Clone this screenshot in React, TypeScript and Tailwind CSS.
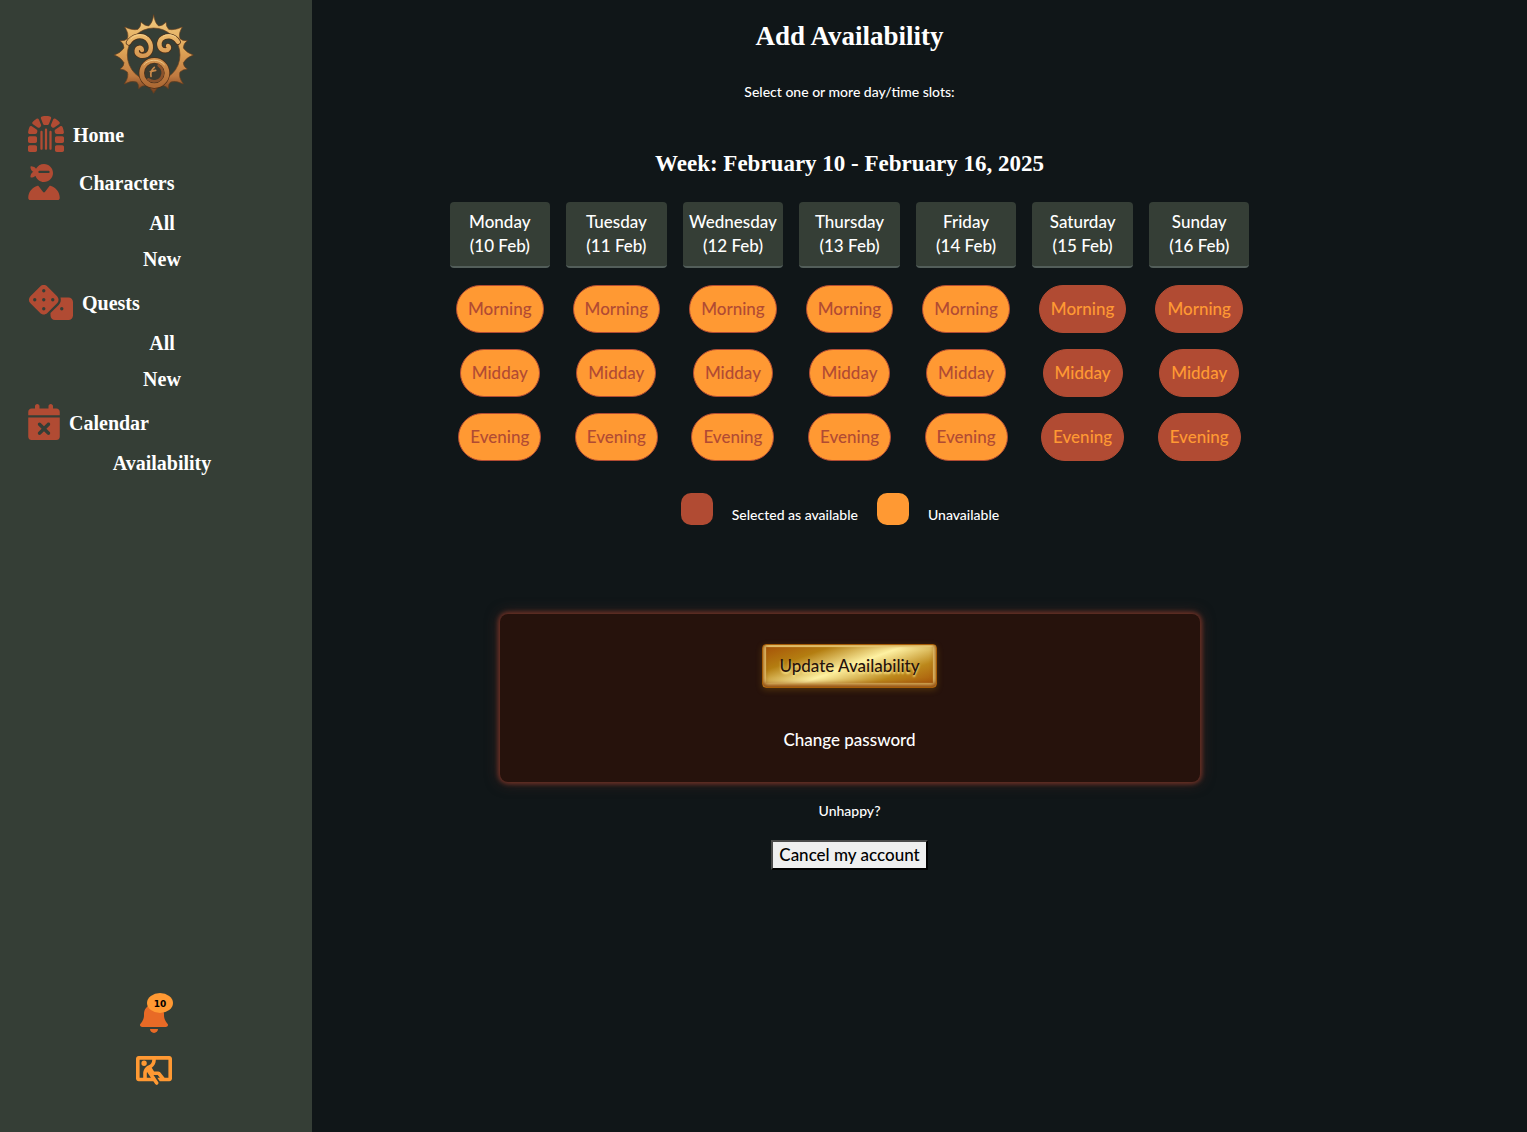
import React, { useState } from "react";
import {
  FaBell,
  FaCalendarXmark,
  FaDice,
  FaDungeon,
  FaPersonThroughWindow,
  FaUserNinja,
} from "react-icons/fa6";

const DAYS = [
  { name: "Monday", date: "(10 Feb)", free: false },
  { name: "Tuesday", date: "(11 Feb)", free: false },
  { name: "Wednesday", date: "(12 Feb)", free: false },
  { name: "Thursday", date: "(13 Feb)", free: false },
  { name: "Friday", date: "(14 Feb)", free: false },
  { name: "Saturday", date: "(15 Feb)", free: true },
  { name: "Sunday", date: "(16 Feb)", free: true },
];

const SLOTS = ["Morning", "Midday", "Evening"];

const NAV = [
  { label: "Home", icon: <FaDungeon className="h-9 w-9" />, gap: "gap-[9px]", sub: [] },
  { label: "Characters", icon: <FaUserNinja className="h-9 w-8" />, gap: "gap-[19px]", sub: ["All", "New"] },
  { label: "Quests", icon: <FaDice className="h-9 w-[45px]" />, gap: "gap-[9px]", sub: ["All", "New"] },
  { label: "Calendar", icon: <FaCalendarXmark className="h-9 w-8" />, gap: "gap-[9px]", sub: ["Availability"] },
];

function Logo() {
  return (
    <svg viewBox="36 27 246 243" className="h-[81px] w-[82px]" aria-hidden="true">
      <defs>
        <linearGradient id="gold" x1="0" y1="0" x2="0" y2="1">
          <stop offset="0" stopColor="#f3cb80" />
          <stop offset="0.45" stopColor="#dfa557" />
          <stop offset="0.78" stopColor="#c07a40" />
          <stop offset="1" stopColor="#6f3a1c" />
        </linearGradient>
        <linearGradient id="curl" gradientUnits="userSpaceOnUse" x1="0" y1="85" x2="0" y2="245">
          <stop offset="0" stopColor="#efbf70" />
          <stop offset="0.5" stopColor="#d4944f" />
          <stop offset="1" stopColor="#ad6934" />
        </linearGradient>
      </defs>
      <path
        fill="url(#gold)"
        stroke="#6b3f1c"
        strokeWidth="2"
        fillRule="evenodd"
        d="M161 32Q164 56 176 66Q188 66 198 54Q198 68 206 76Q222 80 247 69Q234 90 240 104Q248 112 262 110Q250 118 250 132Q260 147 280 153Q260 159 250 176Q250 188 262 195Q248 196 240 204Q234 218 250 240Q228 228 212 234Q204 240 205 254Q196 244 182 244Q170 250 161 268Q152 250 140 244Q126 244 116 254Q117 240 110 234Q94 228 73 240Q88 218 82 204Q74 196 60 195Q72 188 72 176Q62 159 43 153Q62 147 72 132Q72 118 60 110Q74 112 82 104Q88 90 74 69Q98 80 114 76Q123 68 123 54Q134 66 146 66Q158 56 161 32ZM161 72A79 81 0 0 0 82 153A79 79 0 0 0 161 232A79 79 0 0 0 240 153A79 81 0 0 0 161 72Z"
      />
      <g fill="none" strokeLinecap="round">
        <g stroke="#4f2e16" strokeWidth="17">
          <path d="M86 116C98 96 124 90 141 104C158 120 155 145 140 153C124 160 109 152 110 140C111 130 123 128 126 138" />
          <path d="M234 114C222 94 197 92 183 106C172 122 180 139 196 139C207 138 210 129 204 126" />
        </g>
        <g stroke="url(#curl)" strokeWidth="13">
          <path d="M86 116C98 96 124 90 141 104C158 120 155 145 140 153C124 160 109 152 110 140C111 130 123 128 126 138" />
          <path d="M234 114C222 94 197 92 183 106C172 122 180 139 196 139C207 138 210 129 204 126" />
        </g>
        <circle cx="163" cy="207" r="38" fill="#3b3a2f" stroke="#4f2e16" strokeWidth="18" />
        <circle cx="163" cy="207" r="38" stroke="url(#curl)" strokeWidth="14" />
        <path stroke="#8b522b" strokeWidth="8" d="M176 184C189 193 192 209 184 221C176 233 157 236 145 226" />
        <path stroke="#c98a4a" strokeWidth="5" d="M163 190C155 197 151 207 153 217M151 203L167 199" />
      </g>
      <path fill="none" stroke="#f9dc9c" strokeWidth="3" opacity="0.7" d="M92 105C106 91 128 88 141 98M189 97C200 89 217 91 228 100M131 183C145 165 177 163 194 183" />
    </svg>
  );
}

function Sidebar() {
  return (
    <aside className="flex w-[312px] shrink-0 flex-col bg-[#353e36] pt-[13px] pb-[47px] font-['Liberation_Serif',serif] font-bold text-white">
      <a href="#home" aria-label="Home page" className="mr-1.5 self-center">
        <Logo />
      </a>
      <nav className="mt-[15px] pr-4 pl-7">
        {NAV.map((item) => (
          <div key={item.label} className="mt-1">
            <a href="#nav" className={`flex h-11 items-start pt-[3px] ${item.gap}`}>
              <span className="text-[#b14b33]">{item.icon}</span>
              <span className="text-[20px] leading-[38px]">{item.label}</span>
            </a>
            {item.sub.map((s) => (
              <a key={s} href="#nav" className="block text-center text-[20px] leading-9">
                {s}
              </a>
            ))}
          </div>
        ))}
      </nav>
      <div className="mt-auto mr-1 flex flex-col items-center gap-[23px]">
        <button type="button" aria-label="Notifications" className="relative text-[#e86a26]">
          <FaBell className="h-8 w-7" />
          <span className="absolute -top-2 left-[7px] flex h-5 w-[26px] items-center justify-center rounded-[50%] bg-[#ff9933] pt-0.5 font-['DejaVu_Sans',sans-serif] text-[9px] leading-none font-bold text-black">
            10
          </span>
        </button>
        <button type="button" aria-label="Sign out" className="text-[#ff9933]">
          <FaPersonThroughWindow className="h-[29px] w-9" />
        </button>
      </div>
    </aside>
  );
}

export default function App() {
  const [picked, setPicked] = useState<Record<string, boolean>>(() => {
    const start: Record<string, boolean> = {};
    DAYS.forEach((d) => SLOTS.forEach((s) => (start[d.name + s] = d.free)));
    return start;
  });

  return (
    <div className="flex min-h-screen bg-[#101618] font-['Lato',sans-serif] font-medium text-white">
      <Sidebar />
      <main className="flex flex-1 flex-col items-center pt-4 pr-[140px]">
        <h1 className="font-['Liberation_Serif',serif] text-[27px] leading-10 font-bold">Add Availability</h1>
        <p className="mt-6 text-[14px] leading-6">Select one or more day/time slots:</p>
        <h2 className="mt-10 font-['Liberation_Serif',serif] text-[23px] leading-10 font-bold">
          Week: February 10 - February 16, 2025
        </h2>

        <div className="mt-[18px] grid w-full max-w-[800px] grid-cols-7 gap-4 text-[17px] leading-6">
          {DAYS.map((day) => (
            <div key={day.name} className="flex min-w-0 flex-col items-center gap-4">
              <div className="mb-px flex w-full flex-col items-center rounded border-b-2 border-[#535e5a] bg-[#353e36] px-2 py-2">
                <span>{day.name}</span>
                <span>{day.date}</span>
              </div>
              {SLOTS.map((slot) => {
                const key = day.name + slot;
                const on = picked[key];
                return (
                  <button
                    key={slot}
                    type="button"
                    aria-pressed={on}
                    onClick={() => setPicked({ ...picked, [key]: !on })}
                    className={`rounded-[24px] border border-[#b14b33] px-[11px] py-[11px] ${
                      on ? "bg-[#b14b33] text-[#ff9933]" : "bg-[#ff9933] text-[#b14b33]"
                    }`}
                  >
                    {slot}
                  </button>
                );
              })}
            </div>
          ))}
        </div>

        <div className="mt-8 flex gap-[19px] pr-[19px] text-[14px] leading-6">
          <span className="h-8 w-8 rounded-[10px] bg-[#b14b33]" />
          <span className="pt-2.5">Selected as available</span>
          <span className="h-8 w-8 rounded-[10px] bg-[#ff9933]" />
          <span className="pt-2.5">Unavailable</span>
        </div>

        <section className="mt-[87px] flex w-full max-w-[700px] flex-col items-center rounded-lg bg-[#26120c] py-[30px] text-[17px] leading-6 shadow-[0_0_4px_2px_#6b3025,0_0_14px_1px_#3c2420]">
          <button
            type="button"
            className="rounded border border-[#a55d07] bg-[linear-gradient(160deg,#a54e07,#b47e11,#fef1a2,#bc881b,#a54e07)] px-4 py-[9px] text-[#26120c] shadow-[0_2px_6px_rgba(180,126,17,0.3),inset_0_-2px_5px_1px_#8b4208,inset_0_-1px_1px_3px_#fae385] [text-shadow:0_2px_2px_#fae385]"
          >
            Update Availability
          </button>
          <a href="#password" className="mt-10">
            Change password
          </a>
        </section>

        <p className="mt-[17px] text-[14px] leading-6">Unhappy?</p>
        <button
          type="button"
          className="mt-[17px] border-2 border-t-[#4a4a4a] border-r-black border-b-black border-l-[#4a4a4a] bg-[#efefef] px-1.5 py-px text-[17px] leading-6 text-black"
        >
          Cancel my account
        </button>
      </main>
    </div>
  );
}
